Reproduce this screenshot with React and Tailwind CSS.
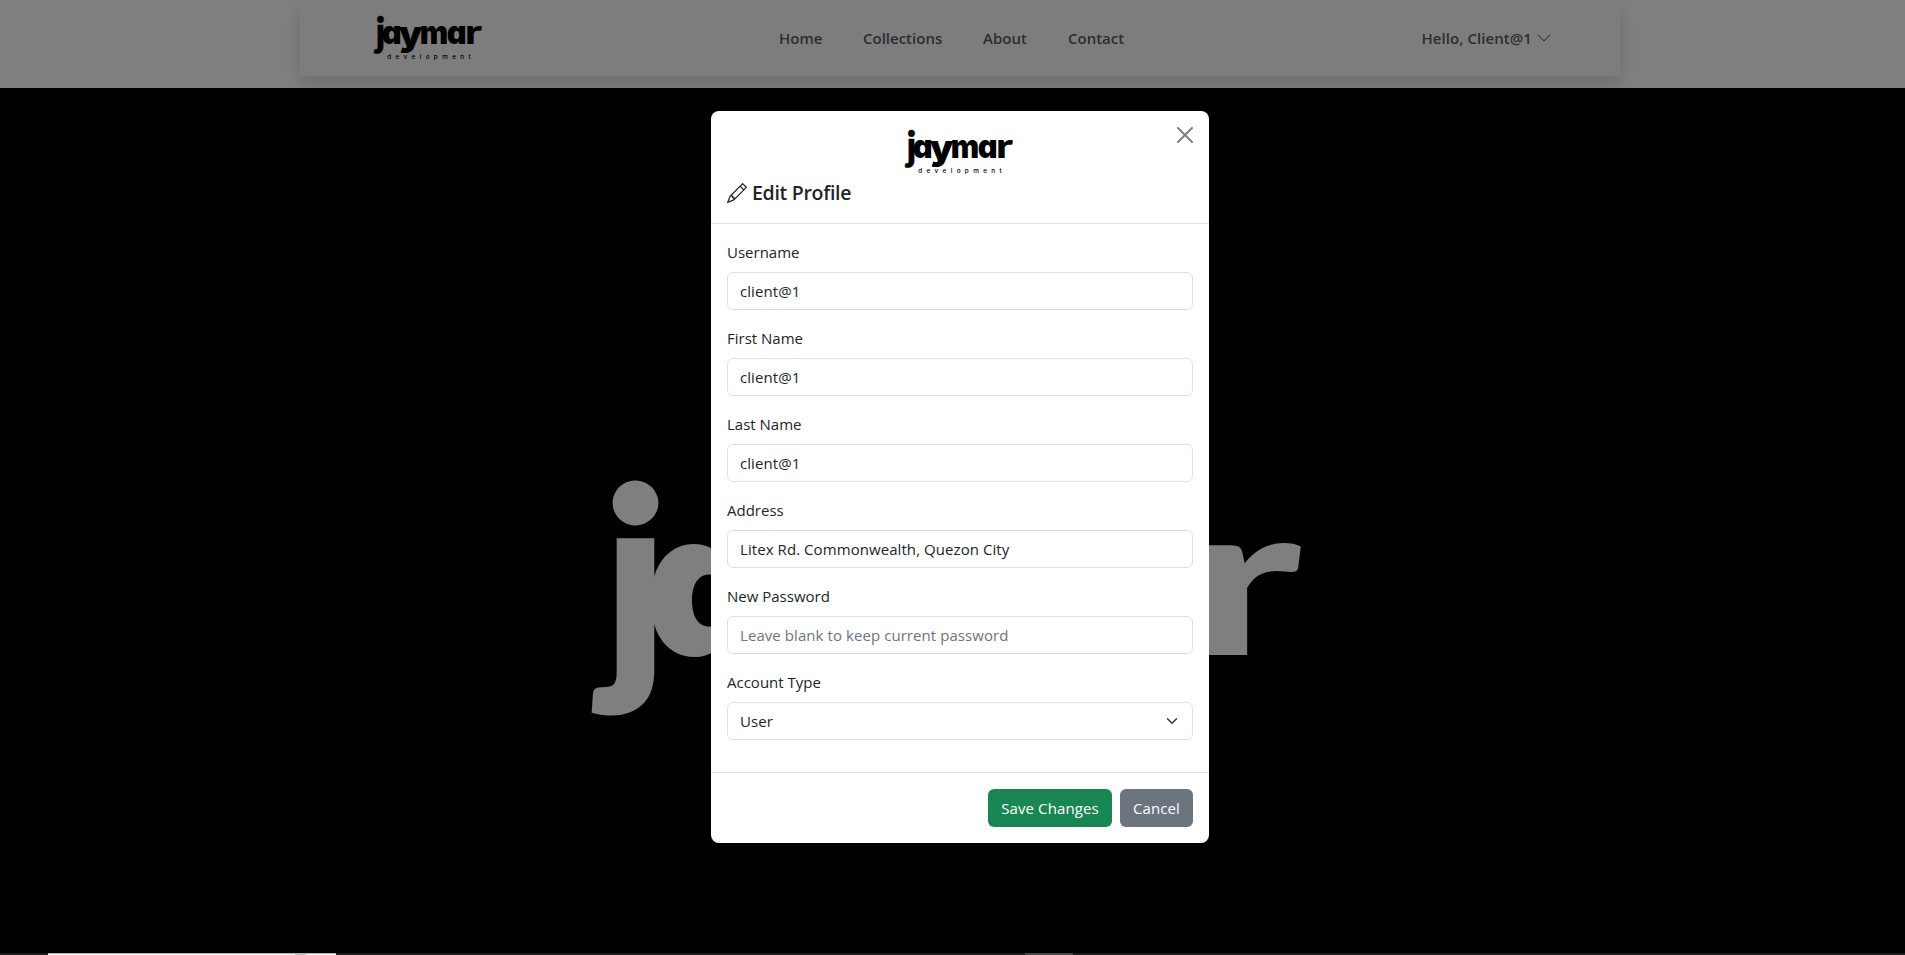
const sans = "font-['Open_Sans','Noto_Sans',sans-serif]";

function Wordmark({ className, tagline }) {
  return (
    <svg className={className} viewBox="587 481 716 290" preserveAspectRatio="none" overflow="visible" fill="currentColor" aria-label="jaymar">
      <g fontSize="198" fontWeight="900" fontFamily="Inter, sans-serif" style={{ fontFeatureSettings: '"cv11" 1' }}>
        <text x="603" y="669" fontSize="250" fontFamily="Lato" stroke="currentColor" strokeWidth="3">j</text>
        <text x="645" y="656" fontSize="202">a</text>
        <text transform="translate(756 666) scale(1.24 1.08)">y</text>
        <text x="894" y="655">m</text>
        <text x="1072" y="656" fontSize="202">a</text>
        <text transform="translate(1189 655) scale(1.4 1)" fontSize="213" fontFamily="Lato">r</text>
      </g>
      {tagline && (
        <text x="681" y="748" fontSize="42" fontWeight="500" textLength="548" lengthAdjust="spacing" fontFamily="Inter, sans-serif">
          development
        </text>
      )}
    </svg>
  );
}

function Label({ children }) {
  return <label className="mb-2 block h-6 text-[15px] leading-6">{children}</label>;
}

const box = "flex h-[38px] w-full items-center rounded-md border border-[#dee2e6] bg-white px-3 text-[15px] leading-6 tracking-[0.07px]";

const fields = [
  { label: "Username", value: "client@1" },
  { label: "First Name", value: "client@1" },
  { label: "Last Name", value: "client@1" },
  { label: "Address", value: "Litex Rd. Commonwealth, Quezon City" },
  { label: "New Password", placeholder: "Leave blank to keep current password" },
];

export default function App() {
  return (
    <div className={`relative flex h-[955px] w-full flex-col overflow-hidden bg-black text-[#212529] ${sans}`}>
      <header className="flex h-[88px] shrink-0 justify-center overflow-hidden bg-white pl-[15px]">
        <nav className="flex h-[76px] w-[1320px] items-center bg-[#fafafa] pr-[68px] pl-[73px] text-[15px] font-semibold text-[#5a5a5a] shadow-[0_8px_16px_rgba(0,0,0,0.15)]">
          <Wordmark tagline className="mt-[2px] h-[47px] w-[109px] text-black" />
          <div className="ml-[297px] flex gap-10">
            <a className="w-[44px] whitespace-nowrap">Home</a>
            <a className="w-[80px] whitespace-nowrap">Collections</a>
            <a className="w-[45px] whitespace-nowrap">About</a>
            <a className="whitespace-nowrap">Contact</a>
          </div>
          <div className="ml-auto flex items-center gap-1 whitespace-nowrap">
            <span className="tracking-[0.07px]">Hello, Client@1</span>
            <svg width="16" height="16" viewBox="0 0 16 16" fill="currentColor">
              <path fillRule="evenodd" d="M1.646 4.646a.5.5 0 0 1 .708 0L8 10.293l5.646-5.647a.5.5 0 0 1 .708.708l-6 6a.5.5 0 0 1-.708 0l-6-6a.5.5 0 0 1 0-.708" />
            </svg>
          </div>
        </nav>
      </header>
      <main className="flex flex-1 flex-col pt-[393px]">
        <Wordmark className="ml-[587px] h-[290px] w-[716px] shrink-0 text-white" />
      </main>

      <div className="absolute inset-0 flex flex-col items-center bg-black/50 pt-[111px]">
        <section className="ml-[15px] w-[498px] overflow-hidden rounded-lg bg-white">
          <div className="relative flex h-[113px] flex-col border-b border-[#dee2e6] px-4 pt-[19px]">
            <Wordmark tagline className="ml-[177px] h-[47px] w-[109px] text-black" />
            <h5 className="mt-px flex items-center gap-[5px] text-[19.5px] leading-[30px] font-semibold tracking-[-0.3px]">
              <svg width="20" height="20" viewBox="0 0 16 16" fill="currentColor">
                <path d="M12.146.146a.5.5 0 0 1 .708 0l3 3a.5.5 0 0 1 0 .708l-10 10a.5.5 0 0 1-.168.11l-5 2a.5.5 0 0 1-.65-.65l2-5a.5.5 0 0 1 .11-.168zM11.207 2.5 13.5 4.793 14.793 3.5 12.5 1.207zm1.586 3L10.5 3.207 4 9.707V10h.5a.5.5 0 0 1 .5.5v.5h.5a.5.5 0 0 1 .5.5v.5h.293zm-9.761 5.175-.106.106-1.528 3.821 3.821-1.528.106-.106A.5.5 0 0 1 5 12.5V12h-.5a.5.5 0 0 1-.5-.5V11h-.5a.5.5 0 0 1-.468-.325" />
              </svg>
              Edit Profile
            </h5>
            <button className="absolute top-4 right-4 opacity-50" aria-label="Close">
              <svg width="16" height="16" viewBox="0 0 16 16" stroke="#000" strokeWidth="2" strokeLinecap="round">
                <path d="M1 1 15 15M15 1 1 15" />
              </svg>
            </button>
          </div>
          <div className="px-4 pt-4 pb-4">
            {fields.map((f) => (
              <div key={f.label} className="mb-4">
                <Label>{f.label}</Label>
                <div className={box}>{f.value || <span className="text-[#6f7479]">{f.placeholder}</span>}</div>
              </div>
            ))}
            <div className="mb-4">
              <Label>Account Type</Label>
              <div className={box}>
                User
                <svg className="ml-auto" width="16" height="12" viewBox="0 0 16 16" fill="none" stroke="#343a40" strokeWidth="2" strokeLinecap="round" strokeLinejoin="round">
                  <path d="m2 5 6 6 6-6" />
                </svg>
              </div>
            </div>
          </div>
          <div className="flex h-[71px] justify-end gap-2 border-t border-[#dee2e6] p-4 text-[15px] tracking-[0.1px] text-white">
            <button className="h-[38px] w-[124px] rounded-md bg-[#198754] whitespace-nowrap">Save Changes</button>
            <button className="h-[38px] w-[73px] rounded-md bg-[#6c757d]">Cancel</button>
          </div>
        </section>
        <div className="mt-auto flex h-[2px] w-full bg-[#1e1b1d]">
          <div className="ml-12 flex h-[2px] w-72 border-t border-[#b4b4b4] bg-[#f6f6f6]">
            <div className="ml-[247px] w-[11px] bg-[#c4c2d2]" />
          </div>
          <div className="ml-[689px] h-[2px] w-12 bg-[#464646]" />
        </div>
      </div>
    </div>
  );
}
